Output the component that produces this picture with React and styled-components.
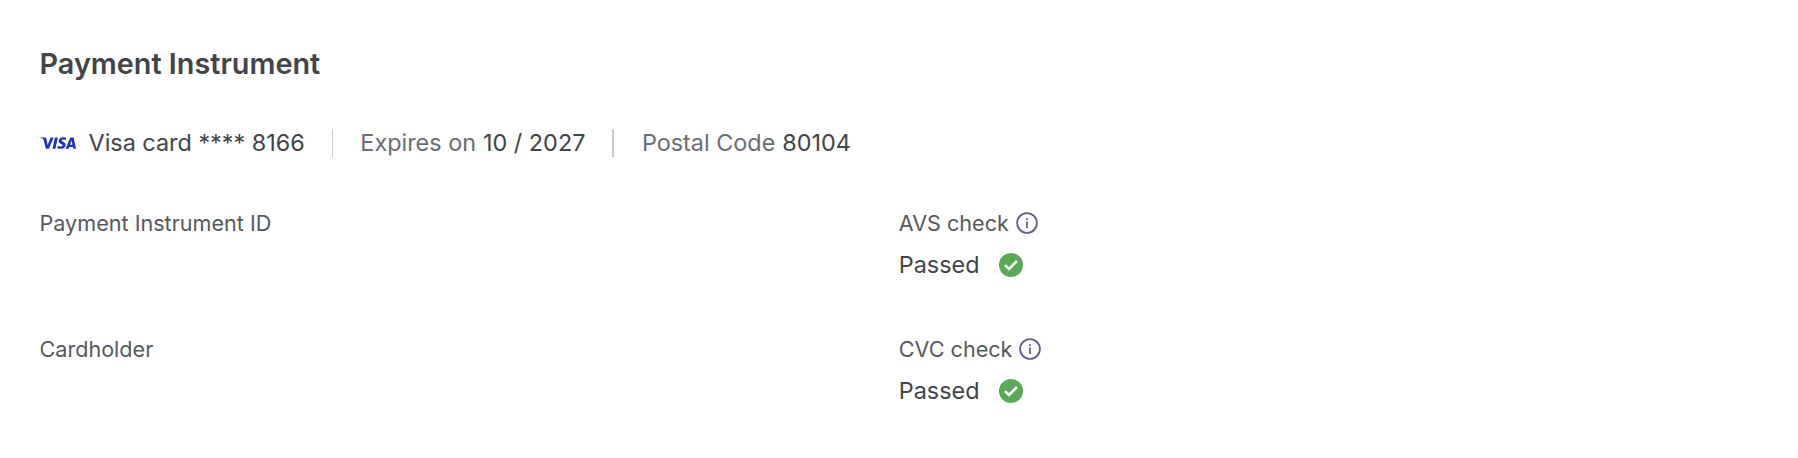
import React from 'react';
import styled, { createGlobalStyle } from 'styled-components';
import { SiVisa } from 'react-icons/si';


const GlobalStyle = createGlobalStyle`
    body {
        margin: 0;
        background: #ffffff;
        font-family: Inter, sans-serif;
        color: #414549;
    }
`;

const Container = styled.section`
    box-sizing: border-box;
    width: 100%;
    height: 458px;
    padding: 44px 40px 0 39.5px;
`;

const Title = styled.h2`
    margin: 0;
    font-size: 28.8px;
    font-weight: 600;
    line-height: 40px;
`;

const Summary = styled.div`
    display: flex;
    align-items: center;
    height: 28px;
    margin-top: 45px;
    font-size: 23.4px;
    line-height: 26px;
    white-space: nowrap;
`;

const VisaLogo = styled(SiVisa)`
    width: 36px;
    height: 36px;
    margin: 0 12.5px 1px 0.5px;
    color: #1a34c4;
`;

const Muted = styled.span`
    margin-right: 7px;
    color: #6a6e73;
`;

const Divider = styled.div`
    width: ${props => props.$width}px;
    height: 28px;
    margin: 0 27.5px 0 27px;
    background: #c9cdda;
`;

const Fields = styled.div`
    display: grid;
    grid-template-columns: 1fr 1fr;
    grid-auto-rows: 126px;
    margin-top: 50px;
`;

const Label = styled.div`
    display: flex;
    align-items: center;
    gap: 7px;
    height: 32px;
    font-size: 21.6px;
    color: #55595d;
`;

const Value = styled.div`
    display: flex;
    align-items: center;
    gap: 19.5px;
    height: 32px;
    margin-top: 10px;
    font-size: 23.4px;
    line-height: 28px;
`;

const Icon = styled.svg`
    display: block;
    flex: none;
`;

const InfoIcon = () => (
    <Icon width='22' height='22' viewBox='0 0 22 22' fill='none'>
        <circle cx='11' cy='11' r='9.9' stroke='#625f8c' strokeWidth='1.8' />
        <circle cx='11' cy='7' r='1.1' fill='#625f8c' />
        <path d='M11 9.6V16' stroke='#625f8c' strokeWidth='1.8' />
    </Icon>
)

const PassedIcon = () => (
    <Icon width='24' height='24' viewBox='0 0 24 24' fill='none'>
        <circle cx='12' cy='12' r='12' fill='#59a957' />
        <path d='M6 12.1L10 16L18 8' stroke='#ffffff' strokeWidth='2.6' />
    </Icon>
)

const Check = ({ name }) => (
    <div>
        <Label>{name}<InfoIcon /></Label>
        <Value>Passed<PassedIcon /></Value>
    </div>
)

const App = () => {
    return (
        <>
            <GlobalStyle />
            <Container>
                <Title>Payment Instrument</Title>
                <Summary>
                    <VisaLogo />
                    <span>Visa card **** 8166</span>
                    <Divider $width={1} />
                    <Muted>Expires on</Muted>
                    <span>10 / 2027</span>
                    <Divider $width={2} />
                    <Muted>Postal Code</Muted>
                    <span>80104</span>
                </Summary>
                <Fields>
                    <Label>Payment Instrument ID</Label>
                    <Check name='AVS check' />
                    <Label>Cardholder</Label>
                    <Check name='CVC check' />
                </Fields>
            </Container>
        </>
    )
}

export default App;
